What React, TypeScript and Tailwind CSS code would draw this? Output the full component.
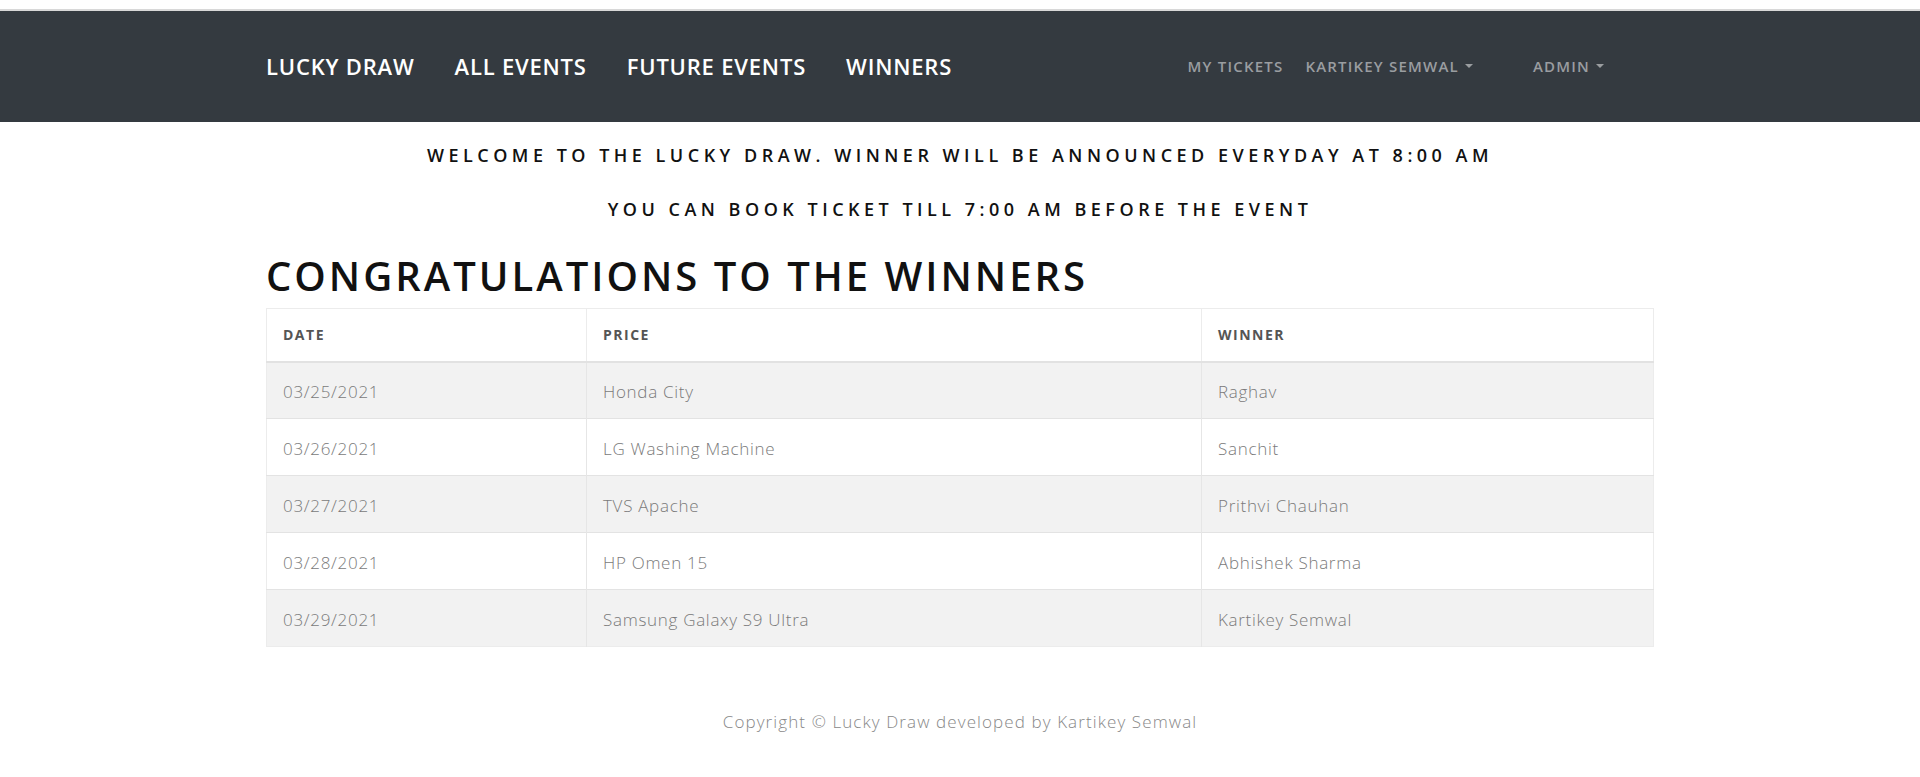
import {ReactNode} from 'react'

type Winner = {
  date: string
  prize: string
  name: string
}

const winners: Winner[] = [
  {date: '03/25/2021', prize: 'Honda City', name: 'Raghav'},
  {date: '03/26/2021', prize: 'LG Washing Machine', name: 'Sanchit'},
  {date: '03/27/2021', prize: 'TVS Apache', name: 'Prithvi Chauhan'},
  {date: '03/28/2021', prize: 'HP Omen 15', name: 'Abhishek Sharma'},
  {date: '03/29/2021', prize: 'Samsung Galaxy S9 Ultra', name: 'Kartikey Semwal'}
]

const Caret = () => (
  <span className="inline-block ml-[6px] w-0 h-0 border-l-[4px] border-r-[4px] border-t-[4px] border-l-transparent border-r-transparent border-t-[#9a9da0] align-middle relative -top-[2px]" />
)

const Navbar = () => {
  return (
    <nav className="mt-[9px] border-t-2 border-[#d8d8d8] bg-[#343a40] h-[113px]">
      <div className="w-[1388px] mx-auto h-full flex items-center">
        <ul className="flex items-center gap-[40px] text-white text-[22px] font-semibold tracking-[0.8px]">
          <li>LUCKY DRAW</li>
          <li>ALL EVENTS</li>
          <li>FUTURE EVENTS</li>
          <li>WINNERS</li>
        </ul>
        <ul className="ml-auto mr-[50px] flex items-center text-[#9a9da0] text-[15px] font-semibold tracking-[1.2px]">
          <li>MY TICKETS</li>
          <li className="ml-[22px]">
            KARTIKEY SEMWAL
            <Caret />
          </li>
          <li className="ml-[60px]">
            ADMIN
            <Caret />
          </li>
        </ul>
      </div>
    </nav>
  )
}

const App = () => {
  return (
    <div className="min-h-screen bg-white font-['Open_Sans',sans-serif]">
      <Navbar />
      <main className="w-[1388px] mx-auto">
        <p className="mt-[20px] h-[27px] leading-[27px] text-center text-[18px] font-semibold tracking-[4.5px] text-[#111]">
          WELCOME TO THE LUCKY DRAW. WINNER WILL BE ANNOUNCED EVERYDAY AT 8:00 AM
        </p>
        <p className="mt-[27px] h-[27px] leading-[27px] text-center text-[18px] font-semibold tracking-[4.5px] text-[#111]">
          YOU CAN BOOK TICKET TILL 7:00 AM BEFORE THE EVENT
        </p>
        <h1 className="mt-[29px] h-[48px] leading-[48px] text-[40px] font-semibold tracking-[3px] text-[#111]">
          CONGRATULATIONS TO THE WINNERS
        </h1>
        <table className="mt-[8px] w-full table-fixed border-collapse border border-[#ececec]">
          <colgroup>
            <col className="w-[320px]" />
            <col className="w-[615px]" />
            <col />
          </colgroup>
          <thead>
            <tr className="h-[53px] border-b-2 border-[#e2e2e2]">
              <th className="px-4 text-left text-[14px] font-bold tracking-[1.5px] text-[#555] border-r border-[#ececec]">DATE</th>
              <th className="px-4 text-left text-[14px] font-bold tracking-[1.5px] text-[#555] border-r border-[#ececec]">PRICE</th>
              <th className="px-4 text-left text-[14px] font-bold tracking-[1.5px] text-[#555]">WINNER</th>
            </tr>
          </thead>
          <tbody>
            {winners.map((winner: Winner, index: number): ReactNode => {
              return (
                <tr
                  key={index}
                  className={`h-[57px] border-t border-[#e3e3e3] ${index % 2 === 0 ? 'bg-[#f2f2f2]' : 'bg-white'}`}
                >
                  <td className="px-4 pt-[3px] text-[17px] font-light tracking-[0.7px] text-[#7a7a7a] border-r border-[#e6e6e6]">{winner.date}</td>
                  <td className="px-4 pt-[3px] text-[17px] font-light tracking-[0.7px] text-[#7a7a7a] border-r border-[#e6e6e6]">{winner.prize}</td>
                  <td className="px-4 pt-[3px] text-[17px] font-light tracking-[0.7px] text-[#7a7a7a]">{winner.name}</td>
                </tr>
              )
            })}
          </tbody>
        </table>
      </main>
      <footer className="mt-[62px] text-center text-[17px] font-light tracking-[1.1px] text-[#888]">
        Copyright © Lucky Draw developed by Kartikey Semwal
      </footer>
    </div>
  )
}

export default App
